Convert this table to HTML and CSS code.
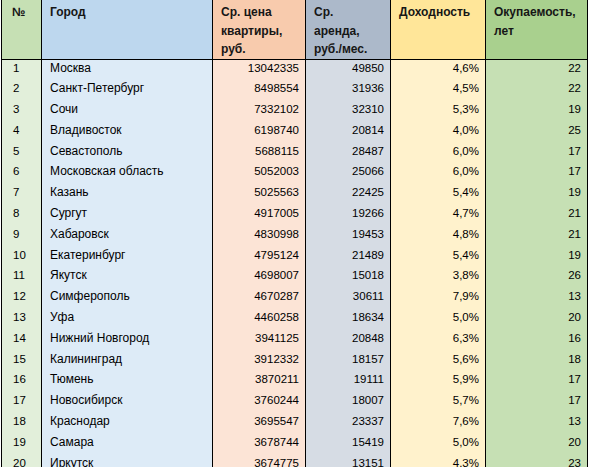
FILE: index.html
```html
<!DOCTYPE html>
<html lang="ru">
<head>
<meta charset="utf-8">
<title>Города</title>
<link rel="stylesheet" href="styles.css">
</head>
<body>
<table class="grid">
  <colgroup>
    <col class="w-num"><col class="w-city"><col class="w-price"><col class="w-rent"><col class="w-yield"><col class="w-payback">
  </colgroup>
  <thead>
    <tr>
      <th class="num">№</th>
      <th class="city">Город</th>
      <th class="price">Ср. цена<br>квартиры,<br>руб.</th>
      <th class="rent">Ср.<br>аренда,<br>руб./мес.</th>
      <th class="yield">Доходность</th>
      <th class="payback">Окупаемость,<br>лет</th>
    </tr>
  </thead>
  <tbody>
    <tr><td class="num">1</td><td class="city">Москва</td><td class="price">13042335</td><td class="rent">49850</td><td class="yield">4,6%</td><td class="payback">22</td></tr>
    <tr><td class="num">2</td><td class="city">Санкт-Петербург</td><td class="price">8498554</td><td class="rent">31936</td><td class="yield">4,5%</td><td class="payback">22</td></tr>
    <tr><td class="num">3</td><td class="city">Сочи</td><td class="price">7332102</td><td class="rent">32310</td><td class="yield">5,3%</td><td class="payback">19</td></tr>
    <tr><td class="num">4</td><td class="city">Владивосток</td><td class="price">6198740</td><td class="rent">20814</td><td class="yield">4,0%</td><td class="payback">25</td></tr>
    <tr><td class="num">5</td><td class="city">Севастополь</td><td class="price">5688115</td><td class="rent">28487</td><td class="yield">6,0%</td><td class="payback">17</td></tr>
    <tr><td class="num">6</td><td class="city">Московская область</td><td class="price">5052003</td><td class="rent">25066</td><td class="yield">6,0%</td><td class="payback">17</td></tr>
    <tr><td class="num">7</td><td class="city">Казань</td><td class="price">5025563</td><td class="rent">22425</td><td class="yield">5,4%</td><td class="payback">19</td></tr>
    <tr><td class="num">8</td><td class="city">Сургут</td><td class="price">4917005</td><td class="rent">19266</td><td class="yield">4,7%</td><td class="payback">21</td></tr>
    <tr><td class="num">9</td><td class="city">Хабаровск</td><td class="price">4830998</td><td class="rent">19453</td><td class="yield">4,8%</td><td class="payback">21</td></tr>
    <tr><td class="num">10</td><td class="city">Екатеринбург</td><td class="price">4795124</td><td class="rent">21489</td><td class="yield">5,4%</td><td class="payback">19</td></tr>
    <tr><td class="num">11</td><td class="city">Якутск</td><td class="price">4698007</td><td class="rent">15018</td><td class="yield">3,8%</td><td class="payback">26</td></tr>
    <tr><td class="num">12</td><td class="city">Симферополь</td><td class="price">4670287</td><td class="rent">30611</td><td class="yield">7,9%</td><td class="payback">13</td></tr>
    <tr><td class="num">13</td><td class="city">Уфа</td><td class="price">4460258</td><td class="rent">18634</td><td class="yield">5,0%</td><td class="payback">20</td></tr>
    <tr><td class="num">14</td><td class="city">Нижний Новгород</td><td class="price">3941125</td><td class="rent">20848</td><td class="yield">6,3%</td><td class="payback">16</td></tr>
    <tr><td class="num">15</td><td class="city">Калининград</td><td class="price">3912332</td><td class="rent">18157</td><td class="yield">5,6%</td><td class="payback">18</td></tr>
    <tr><td class="num">16</td><td class="city">Тюмень</td><td class="price">3870211</td><td class="rent">19111</td><td class="yield">5,9%</td><td class="payback">17</td></tr>
    <tr><td class="num">17</td><td class="city">Новосибирск</td><td class="price">3760244</td><td class="rent">18007</td><td class="yield">5,7%</td><td class="payback">17</td></tr>
    <tr><td class="num">18</td><td class="city">Краснодар</td><td class="price">3695547</td><td class="rent">23337</td><td class="yield">7,6%</td><td class="payback">13</td></tr>
    <tr><td class="num">19</td><td class="city">Самара</td><td class="price">3678744</td><td class="rent">15419</td><td class="yield">5,0%</td><td class="payback">20</td></tr>
    <tr><td class="num">20</td><td class="city">Иркутск</td><td class="price">3674775</td><td class="rent">13151</td><td class="yield">4,3%</td><td class="payback">23</td></tr>
  </tbody>
</table>
</body>
</html>
```

FILE: styles.css
```css
html, body {
  margin: 0;
  padding: 0;
  background: #ffffff;
  overflow: hidden;
}

.grid {
  margin-left: 1px;
  border-collapse: separate;
  border-spacing: 0;
  table-layout: fixed;
  width: 587px;
  font-family: "Liberation Sans", Arial, sans-serif;
  color: #000000;
}

.w-num { width: 41px; }
.w-city { width: 171px; }
.w-price { width: 93px; }
.w-rent { width: 85px; }
.w-yield { width: 95px; }
.w-payback { width: 102px; }

.grid th,
.grid td {
  box-sizing: border-box;
  border-right: 1px solid #000000;
  padding: 0 6px 0 8px;
  white-space: nowrap;
  overflow: hidden;
}

.grid th:first-child,
.grid td:first-child {
  border-left: 1px solid #000000;
}

.grid th {
  height: 57px;
  border-bottom: 1px solid #000000;
  padding-top: 3px;
  vertical-align: top;
  text-align: left;
  font-weight: bold;
  font-size: 12px;
  line-height: 18.5px;
  color: #161616;
}

.grid td {
  height: 20.8px;
  line-height: 17px;
  padding-bottom: 3.8px;
  font-size: 11.5px;
  text-align: right;
  vertical-align: bottom;
}

.grid td.num {
  text-align: left;
  padding-left: 11px;
}

.grid td.city {
  text-align: left;
  font-size: 12px;
}

.grid th.num { padding-left: 10px; background: #c6e0b4; }
.grid th.city { background: #bdd7ee; }
.grid th.price { background: #f8cbad; }
.grid th.rent { background: #acb9ca; }
.grid th.yield { background: #ffe699; }
.grid th.payback { background: #a9d08e; }

.grid td.num { background: #e2efda; }
.grid td.city { background: #ddebf7; }
.grid td.price { background: #fce4d6; }
.grid td.rent { background: #d6dce4; }
.grid td.yield { background: #fff2cc; }
.grid td.payback { background: #c6e0b4; }
```
